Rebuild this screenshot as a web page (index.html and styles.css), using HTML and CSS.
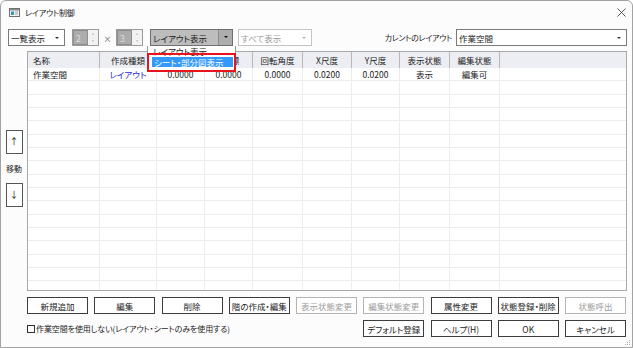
FILE: index.html
```html
<!DOCTYPE html>
<html lang="ja">
<head>
    <meta charset="UTF-8">
    <title>レイアウト制御</title>
    <link rel="stylesheet" href="styles.css">
</head>
<body>
<div class="window">
    <div class="titlebar">
        <svg class="app-icon" width="11" height="9" viewBox="0 0 11 9">
            <rect x="0.5" y="0.5" width="10" height="8" fill="#f4f4f4" stroke="#707070"/>
            <rect x="1" y="1" width="9" height="1.5" fill="#8a8a8a"/>
            <rect x="2" y="3.5" width="3" height="3.5" fill="#2f8fd6"/>
            <rect x="3.5" y="5" width="1.5" height="2" fill="#3fae6a"/>
            <rect x="6" y="3.5" width="3" height="1" fill="#9a9a9a"/>
            <rect x="6" y="5.5" width="3" height="1" fill="#9a9a9a"/>
        </svg>
        <span class="title">レイアウト制御</span>
        <svg class="close" width="9" height="9" viewBox="0 0 9 9">
            <path d="M0.5 0.5L8.5 8.5M8.5 0.5L0.5 8.5" stroke="#444" stroke-width="0.9"/>
        </svg>
    </div>

    <div class="toolbar">
        <div class="combo combo-list"><span>一覧表示</span><i class="arrow"></i></div>
        <div class="spin"><span class="spin-value">2</span><span class="spin-btns"><i class="up"></i><i class="down"></i></span></div>
        <span class="times">×</span>
        <div class="spin"><span class="spin-value">3</span><span class="spin-btns"><i class="up"></i><i class="down"></i></span></div>
        <div class="combo combo-open"><span>レイアウト表示</span><span class="drop-btn"><i class="arrow"></i></span></div>
        <div class="combo combo-disabled"><span>すべて表示</span><i class="arrow"></i></div>
        <span class="current-label">カレントのレイアウト</span>
        <div class="combo combo-current"><span>作業空間</span><i class="arrow"></i></div>
    </div>

    <div class="main">
        <div class="side">
            <div class="move-btn">↑</div>
            <div class="move-label">移動</div>
            <div class="move-btn">↓</div>
        </div>
        <div class="grid">
            <table>
                <colgroup>
                    <col style="width:72px"><col style="width:57px"><col style="width:48px"><col style="width:48px"><col style="width:50px">
                    <col style="width:49px"><col style="width:48px"><col style="width:50px"><col style="width:50px"><col>
                </colgroup>
                <thead>
                    <tr>
                        <th class="left">名称</th><th>作成種類</th><th>X座標</th><th>Y座標</th><th>回転角度</th>
                        <th>X尺度</th><th>Y尺度</th><th>表示状態</th><th>編集状態</th><th class="last"></th>
                    </tr>
                </thead>
                <tbody>
                    <tr>
                        <td class="left">作業空間</td><td class="type">レイアウト</td><td>0.0000</td><td>0.0000</td><td>0.0000</td>
                        <td>0.0200</td><td>0.0200</td><td>表示</td><td>編集可</td><td class="last"></td>
                    </tr>
                    <tr><td></td><td></td><td></td><td></td><td></td><td></td><td></td><td></td><td></td><td class="last"></td></tr>
                    <tr><td></td><td></td><td></td><td></td><td></td><td></td><td></td><td></td><td></td><td class="last"></td></tr>
                    <tr><td></td><td></td><td></td><td></td><td></td><td></td><td></td><td></td><td></td><td class="last"></td></tr>
                    <tr><td></td><td></td><td></td><td></td><td></td><td></td><td></td><td></td><td></td><td class="last"></td></tr>
                    <tr><td></td><td></td><td></td><td></td><td></td><td></td><td></td><td></td><td></td><td class="last"></td></tr>
                    <tr><td></td><td></td><td></td><td></td><td></td><td></td><td></td><td></td><td></td><td class="last"></td></tr>
                    <tr><td></td><td></td><td></td><td></td><td></td><td></td><td></td><td></td><td></td><td class="last"></td></tr>
                    <tr><td></td><td></td><td></td><td></td><td></td><td></td><td></td><td></td><td></td><td class="last"></td></tr>
                    <tr><td></td><td></td><td></td><td></td><td></td><td></td><td></td><td></td><td></td><td class="last"></td></tr>
                    <tr><td></td><td></td><td></td><td></td><td></td><td></td><td></td><td></td><td></td><td class="last"></td></tr>
                    <tr><td></td><td></td><td></td><td></td><td></td><td></td><td></td><td></td><td></td><td class="last"></td></tr>
                    <tr><td></td><td></td><td></td><td></td><td></td><td></td><td></td><td></td><td></td><td class="last"></td></tr>
                    <tr><td></td><td></td><td></td><td></td><td></td><td></td><td></td><td></td><td></td><td class="last"></td></tr>
                    <tr><td></td><td></td><td></td><td></td><td></td><td></td><td></td><td></td><td></td><td class="last"></td></tr>
                    <tr><td></td><td></td><td></td><td></td><td></td><td></td><td></td><td></td><td></td><td class="last"></td></tr>
                    <tr><td></td><td></td><td></td><td></td><td></td><td></td><td></td><td></td><td></td><td class="last"></td></tr>
                    <tr><td></td><td></td><td></td><td></td><td></td><td></td><td></td><td></td><td></td><td class="last"></td></tr>
                </tbody>
            </table>
        </div>
    </div>

    <div class="buttons">
        <div class="btn">新規追加</div>
        <div class="btn">編集</div>
        <div class="btn">削除</div>
        <div class="btn">階の作成・編集</div>
        <div class="btn disabled">表示状態変更</div>
        <div class="btn disabled">編集状態変更</div>
        <div class="btn">属性変更</div>
        <div class="btn">状態登録・削除</div>
        <div class="btn disabled">状態呼出</div>

        <label class="check"><span class="box"></span>作業空間を使用しない(レイアウト・シートのみを使用する)</label>
        <div class="btn">デフォルト登録</div>
        <div class="btn">ヘルプ(H)</div>
        <div class="btn">OK</div>
        <div class="btn">キャンセル</div>
    </div>

    <!-- open drop-down list of the layout combo -->
    <div class="dropdown">
        <div class="item first">レイアウト表示</div>
        <div class="item selected">シート・部分図表示</div>
    </div>
    <div class="mark"></div>

    <svg class="grip" width="7" height="7" viewBox="0 0 7 7">
        <rect x="5" y="1" width="1" height="1" fill="#b0b0b0"/>
        <rect x="3" y="3" width="1" height="1" fill="#b0b0b0"/>
        <rect x="5" y="3" width="1" height="1" fill="#b0b0b0"/>
        <rect x="1" y="5" width="1" height="1" fill="#b0b0b0"/>
        <rect x="3" y="5" width="1" height="1" fill="#b0b0b0"/>
        <rect x="5" y="5" width="1" height="1" fill="#b0b0b0"/>
    </svg>
</div>
</body>
</html>
```

FILE: styles.css
```css
body {
    margin: 0;
    font-family: "Noto Sans CJK JP", "Noto Sans", sans-serif;
    font-size: 8.5px;
    font-feature-settings: "palt";
    color: #1b1b1b;
}

.window {
    position: relative;
    width: 633px;
    height: 348px;
    box-sizing: border-box;
    border: 1px solid #a3a3a3;
    border-radius: 6px 6px 0 0;
    background: #fcfcfc;
    overflow: hidden;
}

.titlebar {
    display: flex;
    align-items: center;
    height: 22px;
    padding: 0 6px 0 8px;
}

.title {
    margin-left: 5px;
    font-size: 8px;
    letter-spacing: -0.2px;
}

.close {
    margin-left: auto;
}

/* toolbar */
.toolbar {
    display: flex;
    align-items: center;
    height: 17px;
    margin-top: 6px;
    padding: 0 5px 0 7px;
}

.combo {
    position: relative;
    display: flex;
    align-items: center;
    height: 17px;
    box-sizing: border-box;
    border: 1px solid #7a7a7a;
    background: #fff;
    padding-left: 2px;
}

.combo .arrow {
    position: absolute;
    right: 5px;
    top: 7px;
    width: 0;
    height: 0;
    border-left: 2px solid transparent;
    border-right: 2px solid transparent;
    border-top: 2px solid #333;
}

.combo-list {
    width: 57px;
}

.combo-open {
    width: 83px;
    margin-left: 7px;
    background: #bdbdbd;
    border-color: #6f6f6f;
}

.combo-open .drop-btn {
    position: absolute;
    right: 0;
    top: 0;
    bottom: 0;
    width: 13px;
    background: #adadad;
    border-left: 1px solid #8c8c8c;
}

.combo-open .drop-btn .arrow {
    right: 4px;
    top: 6px;
    border-top-color: #111;
}

.combo-disabled {
    width: 74px;
    margin-left: 5px;
    border-color: #c4c4c4;
    color: #9a9a9a;
}

.combo-disabled .arrow {
    border-top-color: #b5b5b5;
}

.combo-current {
    width: 171px;
}

.current-label {
    margin-left: auto;
    margin-right: 4px;
    font-size: 8px;
    letter-spacing: -0.3px;
}

.spin {
    display: flex;
    width: 27px;
    height: 17px;
    box-sizing: border-box;
    border: 1px solid #9b9b9b;
    margin-left: 7px;
}

.spin-value {
    flex: 1;
    background: #acacac;
    color: #dedede;
    padding-left: 2px;
    line-height: 15px;
    border: 1px solid #8e8e8e;
}

.spin-btns {
    display: flex;
    flex-direction: column;
    justify-content: space-around;
    align-items: center;
    width: 10px;
    background: #f2f2f2;
}

.spin-btns i {
    width: 0;
    height: 0;
    border-left: 1.5px solid transparent;
    border-right: 1.5px solid transparent;
}

.spin-btns .up {
    border-bottom: 2px solid #b9b9b9;
}

.spin-btns .down {
    border-top: 2px solid #b9b9b9;
}

.times {
    width: 17px;
    margin-right: -7px;
    text-align: center;
    color: #777;
}

/* list area */
.main {
    display: flex;
    height: 240px;
    margin-top: 5px;
}

.side {
    width: 26px;
    display: flex;
    flex-direction: column;
    align-items: center;
    justify-content: center;
    padding-bottom: 6px;
    box-sizing: border-box;
}

.move-btn {
    width: 17px;
    height: 24px;
    box-sizing: border-box;
    border: 1px solid #555;
    background: #fff;
    display: flex;
    align-items: center;
    justify-content: center;
    font-size: 9px;
}

.move-label {
    margin: 9px 0;
    font-size: 8px;
}

.grid {
    flex: 1;
    margin-right: 5px;
    border: 1px solid #a8a8a8;
    background: #fff;
    overflow: hidden;
}

.grid table {
    width: 100%;
    table-layout: fixed;
    border-collapse: separate;
    border-spacing: 0;
}

.grid th {
    height: 16px;
    padding: 0;
    background: #eceef3;
    border-right: 1px solid #b7b7b7;
    font-weight: normal;
    text-align: center;
    white-space: nowrap;
    overflow: hidden;
}

.grid td {
    height: 12.33px;
    padding: 0;
    border-right: 1px solid #ececec;
    border-bottom: 1px solid #ececec;
    text-align: center;
    white-space: nowrap;
    overflow: hidden;
    line-height: 12px;
}

.grid .left {
    text-align: left;
    padding-left: 5px;
}

.grid th.last,
.grid td.last {
    border-right: none;
}

.grid .type {
    color: #2a2ad8;
}

/* buttons */
.buttons {
    display: grid;
    grid-template-columns: repeat(9, 61px);
    grid-template-rows: 17px 17px;
    justify-content: space-between;
    row-gap: 6px;
    margin-top: 6px;
    padding: 0 6px 0 26px;
}

.btn {
    box-sizing: border-box;
    border: 1px solid #3c3c3c;
    background: #fff;
    display: flex;
    align-items: center;
    justify-content: center;
    white-space: nowrap;
}

.btn.disabled {
    border-color: #b4b4b4;
    color: #9c9c9c;
}

.check {
    grid-column: 1 / 6;
    display: flex;
    align-items: center;
    white-space: nowrap;
    font-size: 8px;
    letter-spacing: -0.1px;
}

.check .box {
    width: 8px;
    height: 8px;
    box-sizing: border-box;
    border: 1px solid #333;
    background: #fff;
    margin-right: 1px;
}

/* overlay: open list + red mark */
.dropdown {
    position: absolute;
    left: 146px;
    top: 45px;
    width: 89px;
    height: 26px;
    box-sizing: border-box;
    background: #fff;
    border: 1px solid #9a9a9a;
    border-top: none;
    overflow: hidden;
}

.dropdown .item {
    height: 10px;
    line-height: 10px;
    padding-left: 5px;
    white-space: nowrap;
}

.dropdown .first {
    margin-top: 0;
}

.dropdown .selected {
    margin: 1px 2px 0 4px;
    padding-left: 2px;
    background: #3399ff;
    color: #fff;
}

.mark {
    position: absolute;
    left: 146px;
    top: 52px;
    width: 89px;
    height: 19px;
    box-sizing: border-box;
    border: 2px solid #e8131c;
}

.grip {
    position: absolute;
    right: 1px;
    bottom: 1px;
}
```
